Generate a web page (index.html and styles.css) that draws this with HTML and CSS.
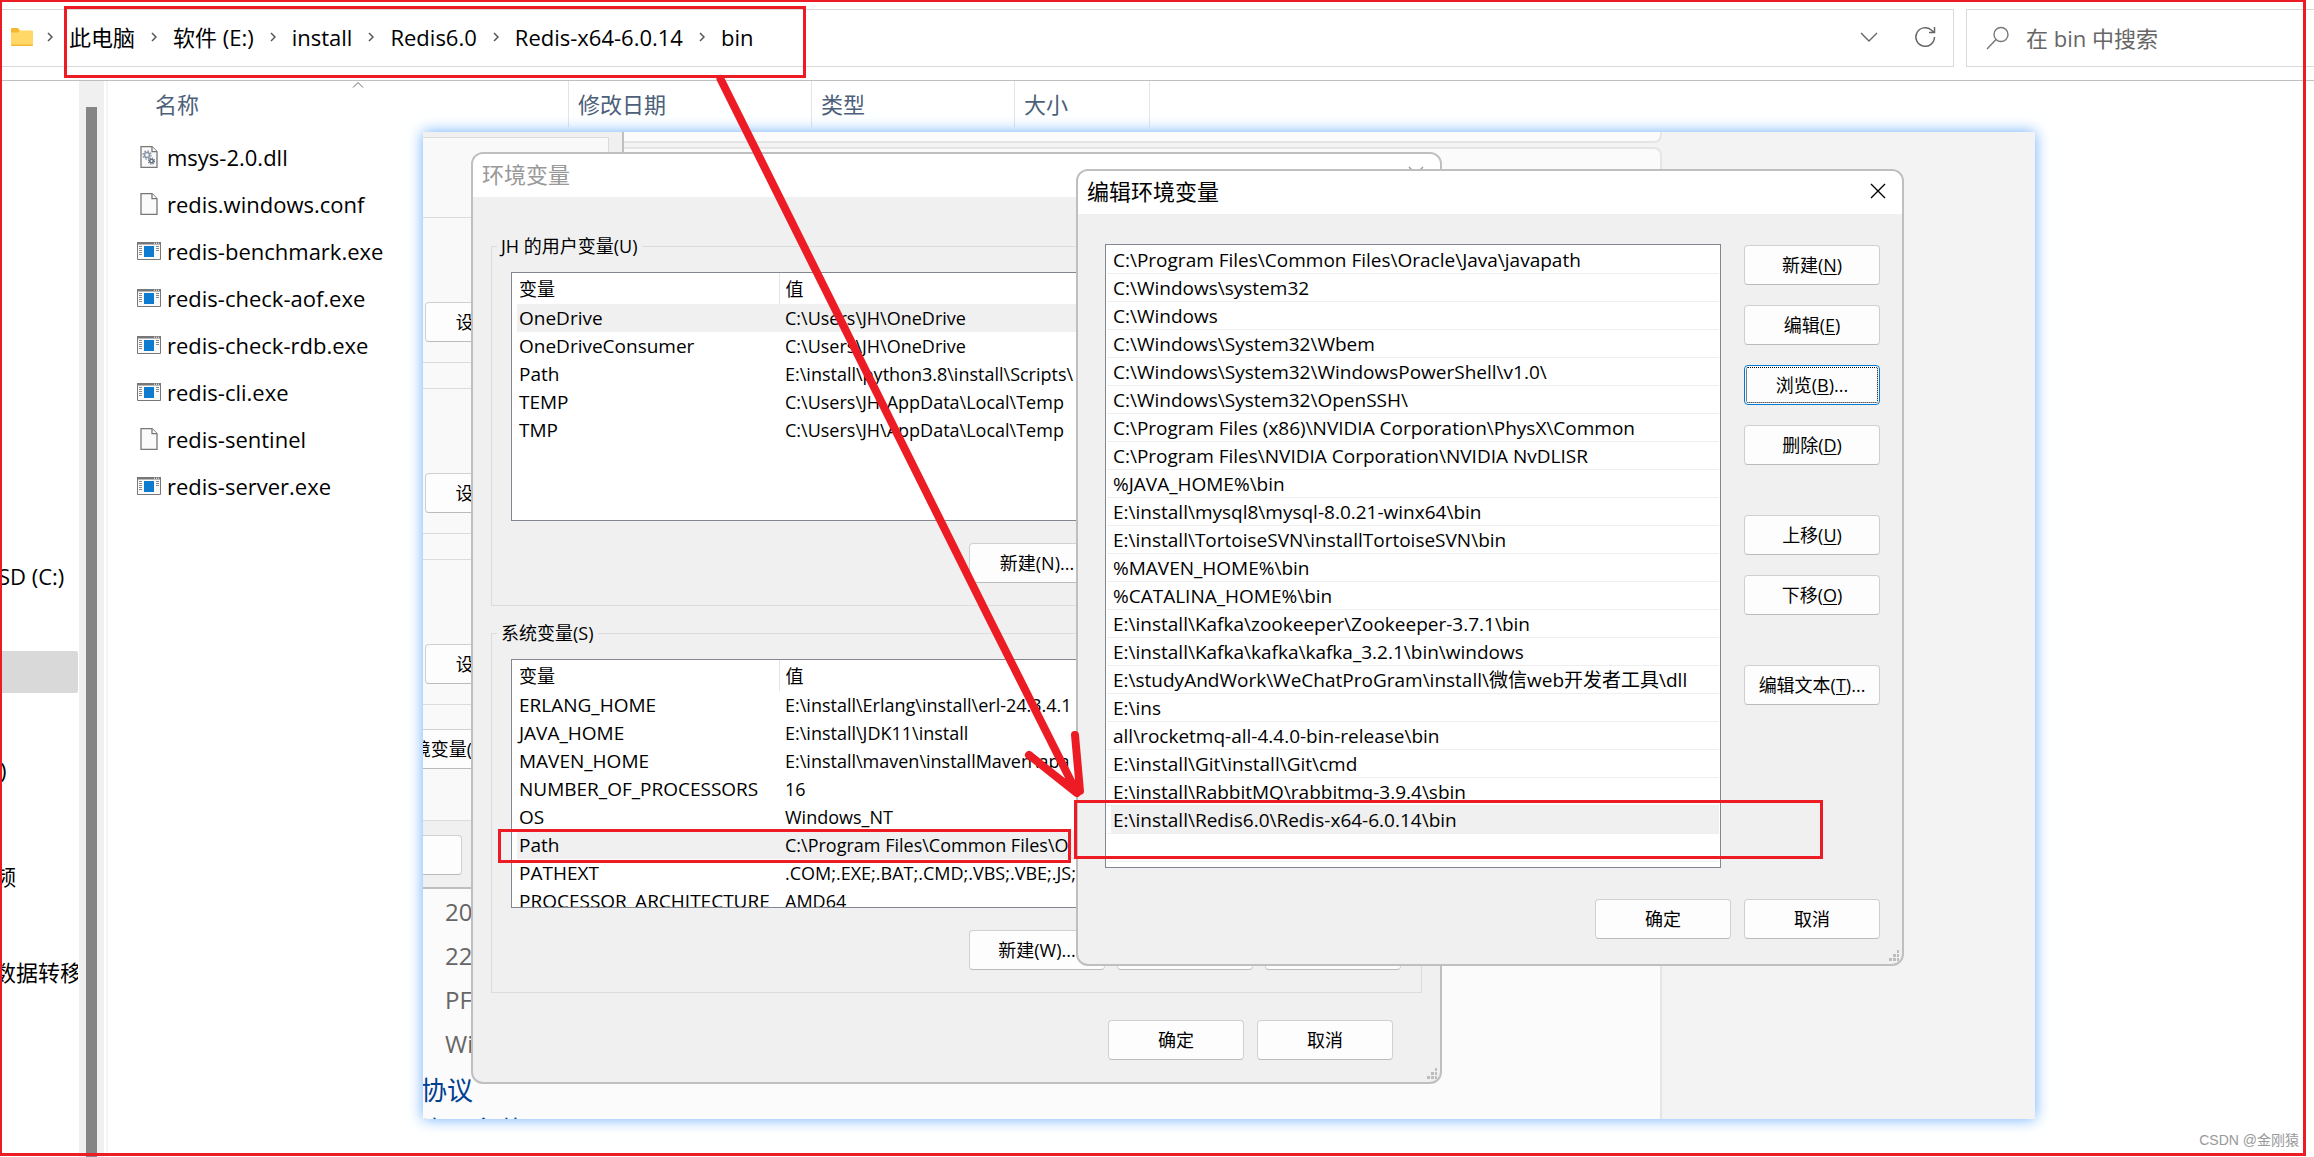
FILE: index.html
```html
<!DOCTYPE html>
<html lang="zh-CN">
<head>
<meta charset="utf-8">
<title>bin</title>
<link rel="stylesheet" href="styles.css">
</head>
<body>
<svg class="defs" aria-hidden="true">
  <symbol id="doc" viewBox="0 0 24 22"><path d="M4 .7h11l5 5V21.300H4z" fill="#fafafa" stroke="#777" stroke-width="1.300"/><path d="M15 .7v5h5" fill="#fff" stroke="#777" stroke-width="1.300"/></symbol>
  <symbol id="gears" viewBox="0 0 24 22"><path d="M4 .7h11l5 5V21.300H4z" fill="#fafafa" stroke="#777" stroke-width="1.300"/><path d="M15 .7v5h5" fill="#fff" stroke="#777" stroke-width="1.300"/><circle cx="10" cy="9" r="2.500" fill="none" stroke="#8a98a8" stroke-width="1.600"/><circle cx="10" cy="9" r="4" fill="none" stroke="#8a98a8" stroke-width="1.400" stroke-dasharray="1.600 1.540"/><circle cx="14.500" cy="15" r="1.800" fill="none" stroke="#5f6d7c" stroke-width="1.400"/><circle cx="14.500" cy="15" r="3.100" fill="none" stroke="#5f6d7c" stroke-width="1.100" stroke-dasharray="1.300 1.140"/></symbol>
  <symbol id="exe" viewBox="0 0 24 18"><path d="M.5.5h23v17H.5z" fill="#fafafa" stroke="#777"/><path d="M0 0h24v2.500H0z" fill="#777"/><path d="M17 1.200h5" stroke="#fff" stroke-dasharray="1 1"/><path d="M7 4h10v11H7z" fill="#0c7bd0"/><path d="M2 4.500h3M2 6.500h3M2 8.500h3M2 10.500h3M2 12.500h3M19 4.500h3M19 6.500h3M19 8.500h3" stroke="#888"/></symbol>
  <symbol id="sep" viewBox="0 0 6 10"><path d="M1 1l4 4-4 4" fill="none" stroke="#555" stroke-width="1.500"/></symbol>
  <symbol id="close" viewBox="0 0 16 16"><path d="M1 1l14 14M15 1L1 15" fill="none" stroke="currentColor" stroke-width="1.400"/></symbol>
  <symbol id="grip" viewBox="0 0 12 12"><path d="M9 0h2v3H9zM5 4h3v3H5zM9 4h2v3H9zM1 8h3v3H1zM5 8h3v3H5zM9 8h2v3H9z" fill="#bdbdbd"/></symbol>
</svg>

<header class="toolbar">
  <nav class="address" aria-label="路径">
    <svg class="folder" viewBox="0 0 22 18"><path d="M0 1q0-1 1-1h6l2 3h13v14q0 1-1 1H1q-1 0-1-1z" fill="#f5b82e"/><path d="M0 4.500h7l2-2h12q1 0 1 1V16.500H0z" fill="#ffd867"/></svg>
    <svg class="sep"><use href="#sep"/></svg><a href="#">此电脑</a>
    <svg class="sep"><use href="#sep"/></svg><a href="#">软件 (E:)</a>
    <svg class="sep"><use href="#sep"/></svg><a href="#">install</a>
    <svg class="sep"><use href="#sep"/></svg><a href="#">Redis6.0</a>
    <svg class="sep"><use href="#sep"/></svg><a href="#">Redis-x64-6.0.14</a>
    <svg class="sep"><use href="#sep"/></svg><a href="#">bin</a>
    <button class="tool first" aria-label="历史"><svg width="18" height="10" viewBox="0 0 18 10"><path d="M1 1l8 8 8-8" fill="none" stroke="#666" stroke-width="1.400"/></svg></button>
    <button class="tool" aria-label="刷新"><svg width="22" height="22" viewBox="0 0 22 22"><path d="M20.500 11a9.300 9.300 0 1 1-3.200-7L20 6.500M20.500 1v5.500H15" fill="none" stroke="#666" stroke-width="1.500"/></svg></button>
  </nav>
  <label class="search">
    <svg width="24" height="24" viewBox="0 0 24 24"><circle cx="15" cy="8.500" r="7" fill="none" stroke="#777" stroke-width="1.400"/><path d="M10 13.500L1 23" stroke="#777" stroke-width="1.400"/></svg>
    <input type="text" placeholder="在 bin 中搜索" aria-label="搜索">
  </label>
</header>

<div class="explorer">
  <nav class="tree" aria-label="导航">
    <a href="#" class="drive-c">SD (C:)</a>
    <a href="#" class="drive-e" aria-label="软件"></a>
    <a href="#" class="drive-f">)</a>
    <a href="#" class="video">频</a>
    <a href="#" class="transfer">数据转移</a>
  </nav>
  <div class="scrollbar"><div class="thumb"></div></div>
  <main class="files">
    <div class="columns">
      <span class="name">名称<svg class="caret" viewBox="0 0 12 6"><path d="M1 5.500l5-5 5 5" fill="none" stroke="#666"/></svg></span>
      <span class="date">修改日期</span>
      <span class="type">类型</span>
      <span class="size">大小</span>
    </div>
    <ul class="rows">
      <li><svg class="page"><use href="#gears"/></svg>msys-2.0.dll</li>
      <li><svg class="page"><use href="#doc"/></svg>redis.windows.conf</li>
      <li><svg class="app"><use href="#exe"/></svg>redis-benchmark.exe</li>
      <li><svg class="app"><use href="#exe"/></svg>redis-check-aof.exe</li>
      <li><svg class="app"><use href="#exe"/></svg>redis-check-rdb.exe</li>
      <li><svg class="app"><use href="#exe"/></svg>redis-cli.exe</li>
      <li><svg class="page"><use href="#doc"/></svg>redis-sentinel</li>
      <li><svg class="app"><use href="#exe"/></svg>redis-server.exe</li>
    </ul>
  </main>
</div>

<section class="desktop">
  <div class="settings">
    <div class="card upper"></div>
    <div class="card about">
      <p>20</p><p>22</p><p>PF</p><p>Wi</p>
      <a href="#">协议</a><a href="#">许可条款</a>
    </div>
  </div>

  <section class="props">
    <div class="tab">
      <div class="intro"></div>
      <div class="group"><button>设置(S)...</button></div>
      <div class="group"><button>设置(E)...</button></div>
      <div class="group"><button>设置(T)...</button></div>
      <button class="env">环境变量(N)...</button>
    </div>
    <div class="foot"><button aria-label="确定"></button></div>
  </section>

  <section class="dialog vars">
    <header><h2>环境变量</h2><button class="close" aria-label="关闭"><svg><use href="#close"/></svg></button></header>
    <fieldset>
      <legend>JH 的用户变量(U)</legend>
      <div class="list">
        <table>
          <thead><tr><th>变量</th><th>值</th></tr></thead>
          <tbody>
            <tr class="selected"><td>OneDrive</td><td>C:\Users\JH\OneDrive</td></tr>
            <tr><td>OneDriveConsumer</td><td>C:\Users\JH\OneDrive</td></tr>
            <tr><td>Path</td><td>E:\install\python3.8\install\Scripts\</td></tr>
            <tr><td>TEMP</td><td>C:\Users\JH\AppData\Local\Temp</td></tr>
            <tr><td>TMP</td><td>C:\Users\JH\AppData\Local\Temp</td></tr>
          </tbody>
        </table>
      </div>
      <div class="actions"><button>新建(N)...</button><button>编辑(E)...</button><button>删除(D)</button></div>
    </fieldset>
    <fieldset>
      <legend>系统变量(S)</legend>
      <div class="list">
        <table>
          <thead><tr><th>变量</th><th>值</th></tr></thead>
          <tbody>
            <tr><td>ERLANG_HOME</td><td>E:\install\Erlang\install\erl-24.3.4.1</td></tr>
            <tr><td>JAVA_HOME</td><td>E:\install\JDK11\install</td></tr>
            <tr><td>MAVEN_HOME</td><td>E:\install\maven\installMaven\apa</td></tr>
            <tr><td>NUMBER_OF_PROCESSORS</td><td>16</td></tr>
            <tr><td>OS</td><td>Windows_NT</td></tr>
            <tr class="selected"><td>Path</td><td>C:\Program Files\Common Files\O</td></tr>
            <tr><td>PATHEXT</td><td>.COM;.EXE;.BAT;.CMD;.VBS;.VBE;.JS;</td></tr>
            <tr><td>PROCESSOR_ARCHITECTURE</td><td>AMD64</td></tr>
          </tbody>
        </table>
      </div>
      <div class="actions"><button>新建(W)...</button><button>编辑(I)...</button><button>删除(L)</button></div>
    </fieldset>
    <div class="confirm"><button>确定</button><button>取消</button></div>
    <svg class="grip"><use href="#grip"/></svg>
  </section>

  <section class="dialog edit">
    <header><h2>编辑环境变量</h2><button class="close" aria-label="关闭"><svg><use href="#close"/></svg></button></header>
    <div class="body">
      <ul class="paths">
        <li><span>C:\Program Files\Common Files\Oracle\Java\javapath</span></li>
        <li><span>C:\Windows\system32</span></li>
        <li><span>C:\Windows</span></li>
        <li><span>C:\Windows\System32\Wbem</span></li>
        <li><span>C:\Windows\System32\WindowsPowerShell\v1.0\</span></li>
        <li><span>C:\Windows\System32\OpenSSH\</span></li>
        <li><span>C:\Program Files (x86)\NVIDIA Corporation\PhysX\Common</span></li>
        <li><span>C:\Program Files\NVIDIA Corporation\NVIDIA NvDLISR</span></li>
        <li><span>%JAVA_HOME%\bin</span></li>
        <li><span>E:\install\mysql8\mysql-8.0.21-winx64\bin</span></li>
        <li><span>E:\install\TortoiseSVN\installTortoiseSVN\bin</span></li>
        <li><span>%MAVEN_HOME%\bin</span></li>
        <li><span>%CATALINA_HOME%\bin</span></li>
        <li><span>E:\install\Kafka\zookeeper\Zookeeper-3.7.1\bin</span></li>
        <li><span>E:\install\Kafka\kafka\kafka_3.2.1\bin\windows</span></li>
        <li><span>E:\studyAndWork\WeChatProGram\install\微信web开发者工具\dll</span></li>
        <li><span>E:\ins</span></li>
        <li><span>all\rocketmq-all-4.4.0-bin-release\bin</span></li>
        <li><span>E:\install\Git\install\Git\cmd</span></li>
        <li><span>E:\install\RabbitMQ\rabbitmq-3.9.4\sbin</span></li>
        <li class="selected"><span>E:\install\Redis6.0\Redis-x64-6.0.14\bin</span></li>
        <li></li>
      </ul>
      <div class="side">
        <button>新建(<u>N</u>)</button>
        <button>编辑(<u>E</u>)</button>
        <button class="focused">浏览(<u>B</u>)...</button>
        <button>删除(<u>D</u>)</button>
        <button class="apart">上移(<u>U</u>)</button>
        <button>下移(<u>O</u>)</button>
        <button class="apart">编辑文本(<u>T</u>)...</button>
      </div>
    </div>
    <div class="confirm"><button>确定</button><button>取消</button></div>
    <svg class="grip"><use href="#grip"/></svg>
  </section>
</section>

<div class="mark frame"></div>
<div class="mark at-address"></div>
<div class="mark at-path"></div>
<div class="mark at-redis"></div>
<svg class="arrow" viewBox="0 0 380 740" aria-hidden="true"><path d="M10.500 9L280 550 367 723M319 685l48 38M365 665l5 56" fill="none" stroke="#ed1c24" stroke-width="8" stroke-linecap="round" stroke-linejoin="round"/></svg>
<footer class="credit">CSDN @金刚猿</footer>
</body>
</html>
```
FILE: styles.css
```css
* { box-sizing: border-box; }
body {
  margin: 0;
  position: relative;
  min-height: 100vh;
  display: flex;
  flex-direction: column;
  overflow: hidden;
  background: #fff;
  color: #000;
  font: 22px/30px "Open Sans", "Noto Sans CJK SC", sans-serif;
}
a { color: inherit; text-decoration: none; }
ul, p, h2 { margin: 0; padding: 0; list-style: none; font-weight: 400; }
button { font: inherit; color: inherit; padding: 0; margin: 0; }
.defs { position: absolute; width: 0; height: 0; }

/* Toolbar */
.toolbar { display: flex; gap: 12px; padding: 9px 0 13px; border-bottom: 1px solid #bfbfbf; }
.address {
  flex: 1; height: 58px; padding: 0 17px 2px 11px;
  display: flex; align-items: center;
  border: 1px solid #d9d9d9; border-left: 0;
}
.folder { width: 22px; height: 18px; }
.sep { width: 6px; height: 10px; margin: 0 16px; }
.folder + .sep { margin: 0 16px 0 14px; }
.tool { display: flex; border: 0; background: none; margin-left: 36px; }
.tool.first { margin-left: auto; }
.search {
  width: 348px; height: 58px; padding-left: 19px;
  display: flex; align-items: center; gap: 16px;
  border: 1px solid #d9d9d9; border-right: 0;
}
.search input { width: 240px; border: 0; padding: 0; font: inherit; background: none; outline: 0; }
.search input::placeholder { color: #666; opacity: 1; }

/* Explorer body */
.explorer { flex: 1; display: flex; }
.tree { width: 79px; padding-top: 474px; overflow: hidden; display: flex; flex-direction: column; }
.tree a { height: 42px; line-height: 42px; margin-right: 1px; text-indent: -6px; white-space: nowrap; overflow: hidden; }
.tree .drive-c { text-indent: -2px; }
.tree .drive-e { margin-top: 54px; background: #d9d9d9; border-radius: 2px; }
.tree .drive-f { margin-top: 56px; text-indent: 0; }
.tree .video { margin-top: 64px; }
.tree .transfer { margin-top: 54px; }
.scrollbar { width: 25px; padding: 26px 7px 0; display: flex; background: #f0f0f0; }
.thumb { flex: 1; background: #858585; }
.files { flex: 1; margin-left: 2px; border-left: 2px solid #f5f5f5; }
.columns { display: flex; height: 46px; line-height: 46px; color: #4c607a; }
.columns span { border-right: 1px solid #e2e5e8; padding-left: 9px; }
.columns .name { width: 461px; padding-left: 47px; position: relative; }
.columns .date { width: 243px; }
.columns .type { width: 203px; }
.columns .size { width: 135px; }
.caret { position: absolute; left: 244px; top: 1px; width: 12px; height: 6px; }
.rows { padding: 6px 0 0 29px; }
.rows li { display: flex; align-items: center; gap: 6px; height: 47px; }
.page { width: 24px; height: 22px; }
.app { width: 24px; height: 18px; }

/* Layered windows */
.desktop {
  position: absolute; left: 423px; top: 132px; width: 1612px; height: 987px;
  overflow: clip; background: #f3f3f3; box-shadow: 0 0 14px #6aadff;
  font-size: 18px; line-height: 24px;
}
.desktop button { width: 136px; height: 40px; border: 1px solid #d0d0d0; border-bottom-color: #bbb; border-radius: 4px; background: #fdfdfd; }
.settings { display: flex; flex-direction: column; gap: 4px; width: 1249px; height: 100%; margin-left: -10px; }
.card { border: 2px solid #e5e5e5; border-radius: 8px; background: #fbfbfb; }
.upper { height: 11px; border-top: 0; border-radius: 0 0 8px 8px; }
.about { flex: 1; border-bottom: 0; border-radius: 8px 8px 0 0; padding: 741px 0 0 30px; overflow: hidden; font-size: 24px; line-height: 44px; color: #666; }
.about a { display: block; height: 40px; line-height: 40px; margin: 4px 0 0 -24px; font-size: 26px; color: #003e92; }
.about a + a { margin-top: 0; }

.props { position: absolute; left: -60px; top: -20px; width: 261px; height: 777px; border: 2px solid #bfbfbf; background: #f0f0f0; }
.tab { height: 684px; margin: 23px 13px 0 0; border: 1px solid #dcdcdc; background: #f9f9f9; }
.intro { height: 79px; }
.group { height: 146px; margin-bottom: 25px; padding: 84px 0 0 59px; border: solid #dcdcdc; border-width: 1px 0; }
.group button { width: 132px; }
.tab .env { display: block; width: 168px; margin: -1px 0 0; }
.foot { padding-top: 14px; }
.foot button { margin-left: -39px; }

.dialog { position: absolute; border: 2px solid #bfbfbf; border-radius: 12px; background: #f0f0f0; overflow: hidden; }
.dialog header { display: flex; justify-content: space-between; height: 43px; padding: 0 16px 0 9px; background: #fff; line-height: 40px; }
.dialog h2 { font-size: 22px; }
.dialog .close { width: 16px; height: 40px; border: 0; background: none; display: flex; align-items: center; }
.close svg { width: 16px; height: 16px; }
.confirm { display: flex; justify-content: flex-end; gap: 13px; }
.grip { position: absolute; right: 2px; bottom: 2px; width: 12px; height: 12px; }

.vars { left: 48px; top: 20px; width: 971px; padding-bottom: 22px; }
.vars header { margin-bottom: 37px; color: #999; }
fieldset { margin: 0 18px 15px; padding: 0 19px 22px; border: 1px solid #dcdcdc; min-width: 0; }
legend { margin-left: -14px; padding: 0 4px; }
.list { height: 249px; margin-top: 14px; padding-left: 5px; border: 1px solid #828790; background: #fff; overflow: hidden; }
table { width: 100%; border-collapse: collapse; table-layout: fixed; }
th, td { height: 28px; padding: 0 0 0 2px; text-align: left; font-weight: 400; white-space: nowrap; }
td:first-child { font-size: 19px; }
th { height: 31px; }
th:first-child { width: 262px; border-right: 1px solid #e5e5e5; }
th + th, td + td { padding-left: 6px; }
.selected { background: #f0f0f0; }
.actions { display: flex; justify-content: flex-end; gap: 12px; margin-top: 22px; padding-right: 1px; }
.vars .confirm { padding: 12px 47px 0 0; }

.edit { left: 653px; top: 37px; width: 828px; padding-bottom: 25px; }
.body { display: flex; gap: 23px; padding: 30px 22px 0 27px; }
.paths { flex: 1; height: 624px; padding: 1px 1px 0; border: 1px solid #828790; background: #fff; overflow: hidden; font-size: 19px; }
.paths li { height: 28px; padding-left: 4px; border-bottom: 1px solid #efefef; line-height: 28px; white-space: nowrap; }
.paths .selected { background: none; }
.paths span { display: block; padding-left: 2px; }
.paths .selected span { background: #f0f0f0; }
.side { display: flex; flex-direction: column; gap: 20px; padding-top: 1px; }
.side .apart { margin-top: 30px; }
.desktop .focused { border-color: #0078d4; outline: 1px dotted #000; outline-offset: -3px; }
.side u { text-underline-offset: 2px; }
.edit .confirm { padding: 31px 22px 0 0; }

/* Red annotations */
.mark { position: absolute; border: 3px solid #ed1c24; pointer-events: none; }
.frame { inset: 0 8px 1px 0; border-width: 2px 3px 3px 2px; }
.at-address { left: 64px; top: 6px; width: 742px; height: 72px; }
.at-path { left: 498px; top: 829px; width: 573px; height: 34px; }
.at-redis { left: 1074px; top: 800px; width: 749px; height: 59px; }
.arrow { position: absolute; left: 710px; top: 70px; width: 380px; height: 740px; pointer-events: none; }
.credit { position: absolute; right: 15px; bottom: 6px; color: #999; font: 14px/22px "Liberation Sans", "Noto Sans CJK SC", sans-serif; }
```
